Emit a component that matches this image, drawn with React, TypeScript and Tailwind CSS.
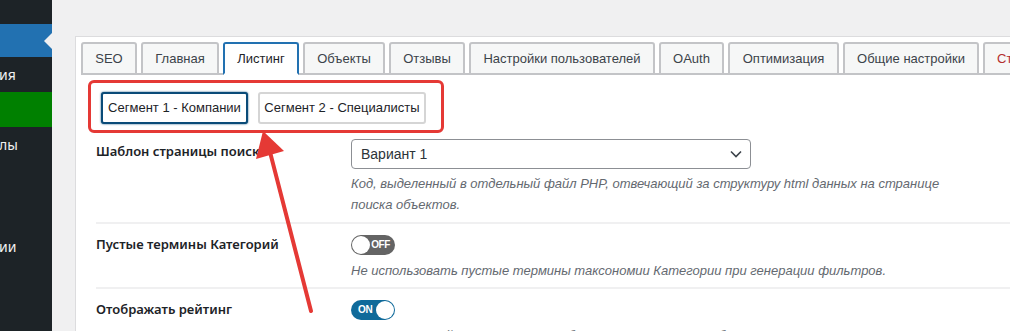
import React from "react";

const tabs: { label: string; w: number; active?: boolean; red?: boolean }[] = [
  { label: "SEO", w: 56 },
  { label: "Главная", w: 78 },
  { label: "Листинг", w: 76, active: true },
  { label: "Объекты", w: 82 },
  { label: "Отзывы", w: 76 },
  { label: "Настройки пользователей", w: 186 },
  { label: "OAuth", w: 65 },
  { label: "Оптимизация", w: 111 },
  { label: "Общие настройки", w: 136 },
  { label: "Статистика", w: 100, red: true },
];

function Toggle({ on }: { on: boolean }) {
  return (
    <div
      className={
        "relative flex h-[20px] w-[44px] items-center rounded-full " +
        (on ? "bg-[#0f6a9a] justify-start" : "bg-[#646464] justify-end")
      }
    >
      <span
        className={
          "text-[10px] font-bold leading-none tracking-[-0.4px] text-white " + (on ? "pl-[7px]" : "pr-[5px]")
        }
        style={{ fontFamily: "'Liberation Sans', Arial, sans-serif" }}
      >
        {on ? "ON" : "OFF"}
      </span>
      <span
        className={
          "absolute top-[1px] h-[18px] w-[18px] rounded-full bg-white " +
          (on ? "right-[1px]" : "left-[1px]")
        }
      />
    </div>
  );
}

export default function App() {
  const sans = { fontFamily: "'Liberation Sans', Arial, sans-serif" };
  const label = { fontFamily: "'Noto Sans', 'Open Sans', sans-serif" };
  return (
    <div className="relative flex h-[331px] w-[1010px] overflow-hidden bg-[#f0f0f1]" style={sans}>
      {/* Sidebar */}
      <div className="flex w-[52px] shrink-0 flex-col bg-[#1d2327] text-[14px] text-[#f0f0f1]" style={label}>
        <div className="h-[24px]" />
        <div className="relative h-[33px] bg-[#2271b1]">
          <span className="absolute right-0 top-[9px] h-0 w-0 border-y-[8px] border-r-[8px] border-y-transparent border-r-[#f0f0f1]" />
        </div>
        <div className="flex h-[35px] items-center overflow-hidden whitespace-nowrap">
          <span className="-ml-[1px]">ия</span>
        </div>
        <div className="h-[35px] bg-[#008000]" />
        <div className="flex h-[34px] items-center overflow-hidden whitespace-nowrap">
          <span className="-ml-[1px]">лы</span>
        </div>
        <div className="h-[68px]" />
        <div className="flex h-[34px] items-center overflow-hidden whitespace-nowrap">
          <span className="-ml-[1px]">ии</span>
        </div>
      </div>

      {/* Main */}
      <div className="flex-1 pl-[23px] pt-[36px]">
        <div className="h-full border-l border-t border-[#dcdcde] bg-white pl-[5px] pt-[5px]">
          {/* Tabs */}
          <div className="flex gap-[4px] border-b-2 border-[#c3c4c7] whitespace-nowrap">
            {tabs.map((t) => (
              <div
                key={t.label}
                className={
                  "-mb-[2px] flex h-[33px] shrink-0 items-center justify-center rounded-t-[3px] border-2 text-[13px] " +
                  (t.active
                    ? "border-[#2271b1] border-b-white bg-white text-[#1d2327]"
                    : "border-[#c3c4c7] border-b-[#c3c4c7] bg-[#f6f7f7] " +
                      (t.red ? "text-[#b32d2e] justify-start pl-[12px]" : "text-[#3c434a]"))
                }
                style={{ width: t.w }}
              >
                {t.label}
              </div>
            ))}
          </div>

          {/* Segment buttons */}
          <div className="flex gap-[10px] pl-[20px] pt-[17px] whitespace-nowrap">
            <div className="flex h-[32px] w-[147px] items-center justify-center rounded-[3px] border-2 border-[#0a4b78] bg-white text-[13px] text-[#1d2327] shadow-[0_0_2px_#0a4b78]">
              Сегмент 1 - Компании
            </div>
            <div className="flex h-[32px] w-[168px] items-center justify-center rounded-[3px] border-2 border-[#d5d5d5] bg-white text-[13px] text-[#1d2327]">
              Сегмент 2 - Специалисты
            </div>
          </div>

          {/* Form rows */}
          <div className="pl-[15px] pt-[15px]">
            <div className="flex border-b-2 border-[#f0f0f1] pb-[7px]">
              <div className="w-[255px] pt-[3px] text-[13px] font-semibold text-[#1d2327]" style={label}>
                Шаблон страницы поиска
              </div>
              <div>
                <div className="flex h-[30px] w-[400px] items-center justify-between rounded-[4px] border border-[#8c8f94] pl-[9px] pr-[8px] text-[14px] text-[#2c3338]">
                  <span>Вариант 1</span>
                  <svg width="12" height="8" viewBox="0 0 12 8" fill="none">
                    <path d="M1 1.5 L6 6.5 L11 1.5" stroke="#3c434a" strokeWidth="1.6" />
                  </svg>
                </div>
                <div className="pt-[4px] text-[13px] italic leading-[21px] text-[#646970]">
                  Код, выделенный в отдельный файл PHP, отвечающий за структуру html данных на странице
                  <br />
                  поиска объектов.
                </div>
              </div>
            </div>

            <div className="flex border-b-2 border-[#f0f0f1] pb-[6px] pt-[11px]">
              <div className="w-[255px] text-[13px] font-semibold leading-[18px] text-[#1d2327]" style={label}>
                Пустые термины Категорий
              </div>
              <div>
                <Toggle on={false} />
                <div className="pt-[5px] text-[13px] italic leading-[21px] text-[#646970]">
                  Не использовать пустые термины таксономии Категории при генерации фильтров.
                </div>
              </div>
            </div>

            <div className="flex pt-[11px]">
              <div className="w-[255px] text-[13px] font-semibold leading-[18px] text-[#1d2327]" style={label}>
                Отображать рейтинг
              </div>
              <div>
                <Toggle on={true} />
                <div className="pt-[5px] text-[13px] italic leading-[21px] text-[#646970]">
                  Показывать рейтинг в карточке объекта и на странице объекта.
                </div>
              </div>
            </div>
          </div>
        </div>
      </div>

      {/* Annotation: red box */}
      <div className="pointer-events-none absolute left-[88px] top-[80px] h-[53px] w-[356px] rounded-[6px] border-[3px] border-[#e53935]" />
      {/* Annotation: arrow */}
      <svg className="pointer-events-none absolute left-0 top-0" width="1010" height="331" viewBox="0 0 1010 331">
        <line x1="311" y1="311" x2="270" y2="152" stroke="#e53935" strokeWidth="4" strokeLinecap="round" />
        <polygon points="263,131 256,159 284,151" fill="#e53935" />
      </svg>
    </div>
  );
}
